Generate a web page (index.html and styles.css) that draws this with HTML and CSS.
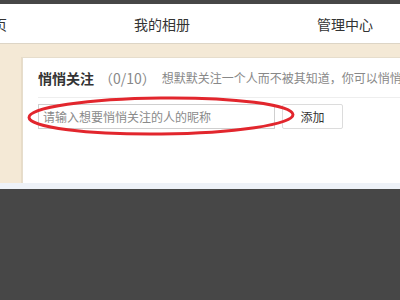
FILE: index.html
```html
<!DOCTYPE html>
<html lang="zh-CN">
<head>
<meta charset="utf-8">
<link rel="stylesheet" href="styles.css">
</head>
<body>
<div class="topbar"></div>
<nav class="nav">
  <span class="nav-item">首页</span>
  <span class="nav-item">我的相册</span>
  <span class="nav-item">管理中心</span>
</nav>
<div class="main">
  <div class="side"></div>
  <section class="card">
    <div class="card-head">
      <span class="title">悄悄关注</span>
      <span class="count">（0/10）</span>
      <span class="desc">想默默关注一个人而不被其知道，你可以悄悄关注他</span>
    </div>
    <div class="form">
      <input class="name-input" type="text" placeholder="请输入想要悄悄关注的人的昵称">
      <button class="add-btn">添加</button>
      <svg class="mark" width="276" height="46" viewBox="0 0 276 46">
        <ellipse cx="135" cy="22" rx="132" ry="18" fill="none" stroke="#e2262d" stroke-width="3" transform="rotate(-0.6 135 22)"/>
      </svg>
    </div>
  </section>
</div>
<div class="strip"></div>
</body>
</html>
```
FILE: styles.css
```css
html, body {
  margin: 0;
  padding: 0;
  background: #474747;
  font-family: "Noto Sans CJK SC", "Noto Sans", sans-serif;
  overflow: hidden;
}
.topbar {
  height: 4px;
  background: #474747;
}
.nav {
  height: 39px;
  background: #fff;
  border-bottom: 1px solid #ddd5c6;
  display: flex;
  align-items: center;
  gap: 127px;
  margin-left: -21px;
  white-space: nowrap;
  font-size: 14px;
  color: #333;
}
.main {
  background: #f4e9d6;
  height: 139px;
  padding-top: 13px;
  display: flex;
  box-sizing: border-box;
}
.side {
  width: 21px;
  flex: none;
  border-right: 1px solid #e8dcc7;
}
.card {
  flex: 1;
  min-width: 420px;
  background: #fff;
  border-top: 1px solid #e6ddcc;
  border-left: 1px solid #e6ddcc;
  padding: 0 0 0 15px;
}
.card-head {
  height: 39px;
  border-bottom: 1px solid #eeeeee;
  display: flex;
  align-items: center;
  white-space: nowrap;
  margin-right: -200px;
}
.title {
  font-size: 14px;
  font-weight: bold;
  color: #333;
}
.count {
  font-size: 14px;
  color: #888;
  margin-left: 5px;
}
.desc {
  font-size: 12px;
  color: #888;
  margin-left: 6px;
}
.form {
  position: relative;
  display: flex;
  align-items: center;
  gap: 7px;
  padding-top: 6px;
}
.name-input {
  width: 237px;
  height: 25px;
  box-sizing: border-box;
  border: 1px solid #cfcfcf;
  padding: 0 4px;
  font-family: inherit;
  font-size: 12px;
  color: #333;
  outline: none;
}
.name-input::placeholder {
  color: #8a8a8a;
}
.add-btn {
  width: 61px;
  height: 25px;
  box-sizing: border-box;
  background: #fff;
  border: 1px solid #dcdcdc;
  border-radius: 2px;
  font-family: inherit;
  font-size: 12px;
  color: #333;
  padding: 0;
}
.mark {
  position: absolute;
  left: -12px;
  top: -4px;
  pointer-events: none;
}
.strip {
  height: 6px;
  background: #eef2f8;
}
```
